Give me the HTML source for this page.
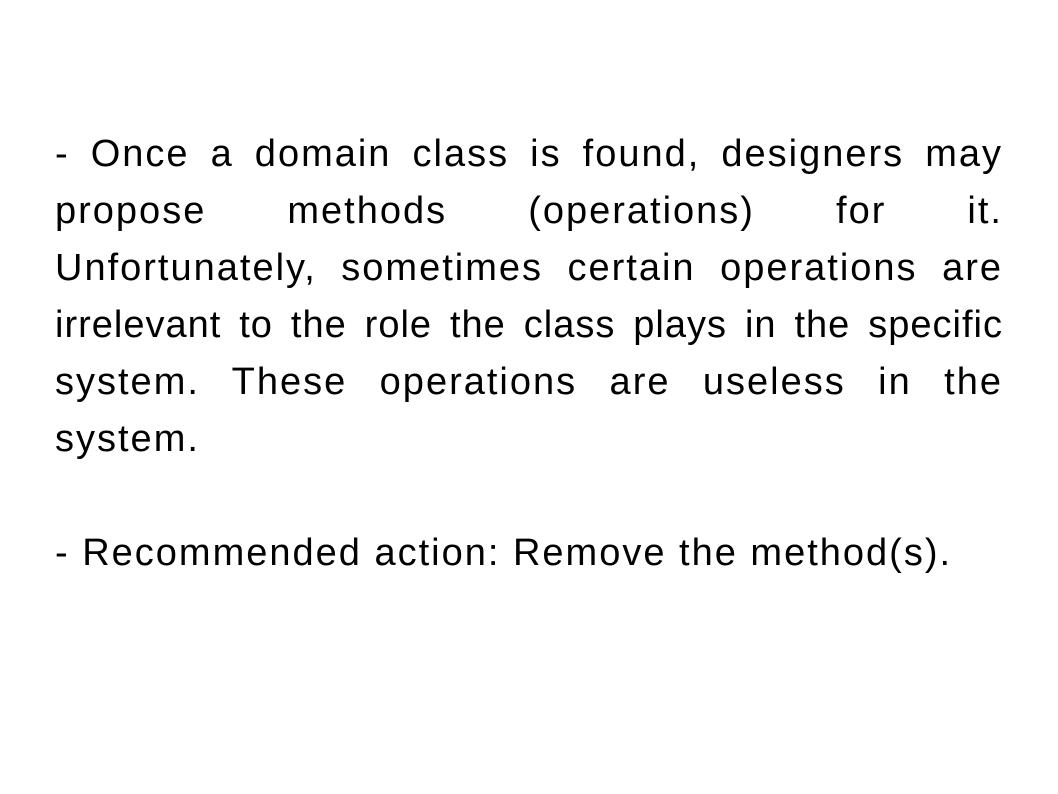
<!DOCTYPE html>
<html><head><meta charset="utf-8"><style>
html,body{margin:0;padding:0;background:#fff;width:1058px;height:794px;overflow:hidden}
.wrap{position:absolute;left:55px;top:126px;width:948px;font-family:"Liberation Sans","Noto Sans CJK KR",sans-serif;font-size:38px;line-height:57px;color:#000;letter-spacing:2px}
.j{text-align:justify;text-align-last:justify}
.l{text-align:left;white-space:nowrap}
</style></head><body>
<div class="wrap">
<div class="j">- Once a domain class is found, designers may</div>
<div class="j">propose methods (operations) for it.</div>
<div class="j">Unfortunately, sometimes certain operations are</div>
<div class="j" style="letter-spacing:1px">irrelevant to the role the class plays in the specific</div>
<div class="j">system. These operations are useless in the</div>
<div class="l">system.</div>
<div class="l" style="margin-top:57px">- Recommended action: Remove the method(s).</div>
</div>
</body></html>
